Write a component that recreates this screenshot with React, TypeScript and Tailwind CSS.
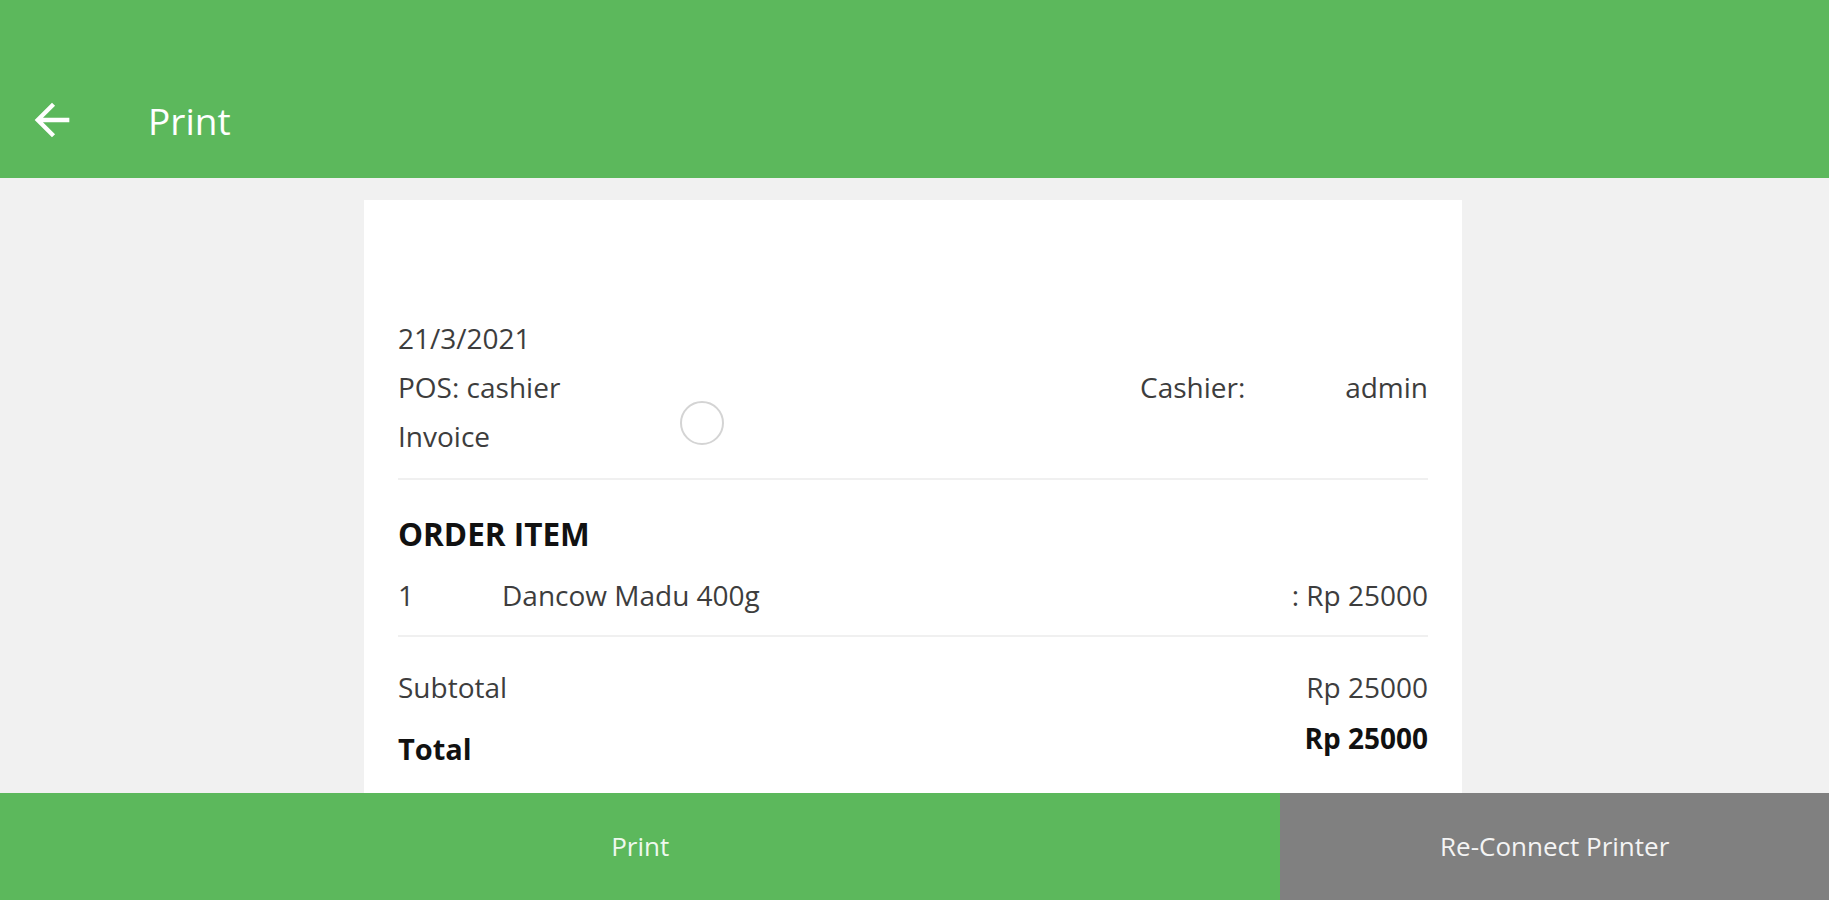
import React from 'react'

const font = { fontFamily: '"Open Sans", "Liberation Sans", sans-serif' }

const BackArrow: React.FC = () => (
  <svg width="52" height="52" viewBox="0 0 24 24" fill="white">
    <path d="M20 11H7.83l5.59-5.59L12 4l-8 8 8 8 1.41-1.41L7.83 13H20v-2z" />
  </svg>
)

const Divider: React.FC<{ className?: string }> = ({ className = '' }) => (
  <div className={`h-[2px] bg-[#f0f0f0] ${className}`} />
)

const App: React.FC = () => {
  return (
    <div className="h-[900px] w-full flex flex-col overflow-hidden bg-[#f1f1f1]" style={font}>
      {/* Header */}
      <header className="h-[178px] shrink-0 bg-[#5cb85c] flex items-center pt-[62px] pl-[26px]">
        <BackArrow />
        <h1 className="ml-[70px] text-[37px] text-white leading-none">Print</h1>
      </header>

      {/* Receipt */}
      <main className="flex-1 min-h-0 overflow-hidden pt-[22px]">
        <div className="relative ml-[364px] w-[1098px] h-full bg-white px-[34px] pt-[114px] text-[28px] text-[#3d3d3d]">
          <div className="leading-[49px]">21/3/2021</div>
          <div className="flex justify-between leading-[49px]">
            <span>POS: cashier</span>
            <div className="w-[288px] flex justify-between">
              <span>Cashier:</span>
              <span>admin</span>
            </div>
          </div>
          <div className="leading-[49px]">Invoice</div>
          <Divider className="mt-[17px]" />

          <div className="mt-[32px] text-[31.5px] font-bold text-[#111] leading-[44px]">ORDER ITEM</div>
          <div className="mt-[15px] flex leading-[49px]">
            <span className="w-[104px]">1</span>
            <span className="flex-1">Dancow Madu 400g</span>
            <span>: Rp 25000</span>
          </div>
          <Divider className="mt-[15px]" />

          <div className="mt-[26px] flex justify-between leading-[49px]">
            <span>Subtotal</span>
            <span>Rp 25000</span>
          </div>
          <div className="mt-[15px] flex justify-between items-start">
            <span className="text-[29px] font-bold text-[#111] leading-[44px]">Total</span>
            <span className="font-bold text-[#111] text-[28px] leading-[18px] pt-[2px]">Rp 25000</span>
          </div>

          {/* touch indicator */}
          <div className="absolute left-[316px] top-[201px] w-[44px] h-[44px] rounded-full border-2 border-[#d4d4d4]" />
        </div>
      </main>

      {/* Footer buttons */}
      <footer className="h-[107px] shrink-0 flex text-[26px]">
        <button className="w-[70%] bg-[#5cb85c] text-[#eef8ee]">Print</button>
        <button className="flex-1 bg-[#808080] text-[#f4f4f4]">Re-Connect Printer</button>
      </footer>
    </div>
  )
}

export default App
